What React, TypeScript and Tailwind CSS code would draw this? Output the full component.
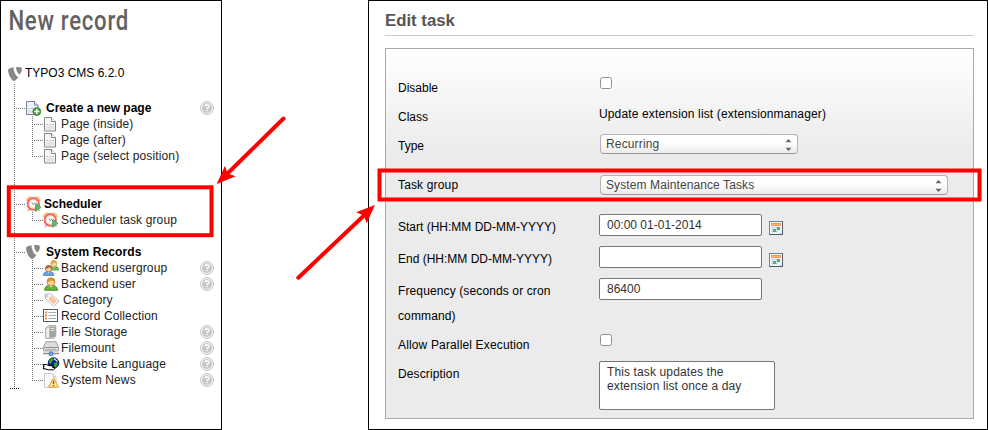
import type { ReactNode } from "react";
import { SiTypo3 } from "react-icons/si";

const V = "w-px bg-[repeating-linear-gradient(180deg,#777_0px,#777_1px,transparent_1px,transparent_2px)]";
const H = "h-px bg-[repeating-linear-gradient(90deg,transparent_0px,transparent_1px,#777_1px,#777_2px)]";

function Help() {
  return (
    <svg width="14" height="14" viewBox="0 0 14 14">
      <circle cx="7" cy="7" r="6.5" fill="#f4f4f4" stroke="#c0c0c0" strokeWidth="0.9" />
      <circle cx="7" cy="7" r="5" fill="#c6c6c6" />
      <path d="M5.1 5.5c0-2.4 3.9-2.4 3.9-.1 0 1.3-1.9 1.3-1.9 2.500" fill="none" stroke="#fff" strokeWidth="1.4" />
      <rect x="6.4" y="9" width="1.4" height="1.4" fill="#fff" />
    </svg>
  );
}

function PageIcon() {
  return (
    <svg width="13" height="15" viewBox="0 0 13 15">
      <path d="M.5.5h7l4 4v9.500H.5z" fill="#f7f7f7" stroke="#868686" />
      <path d="M7.500.5v4h4" fill="#fff" stroke="#868686" />
      <path d="M2 7.500h8" stroke="#bbb" strokeDasharray="2 1" />
      <path d="M2 9h8v3.500H2z" fill="#e2e2e2" />
    </svg>
  );
}

function NewPageIcon() {
  return (
    <svg width="16" height="16" viewBox="0 0 16 16">
      <path d="M.5.5h8l3.500 3.500v9.500H.5z" fill="#eef1f5" stroke="#73839a" />
      <path d="M8.500.5V4H12" fill="#fff" stroke="#73839a" />
      <path d="M2 7.500h8" stroke="#b9bec6" strokeDasharray="2 1" />
      <path d="M2 9h8v3H2z" fill="#dfe2e6" />
      <circle cx="10.800" cy="10.500" r="4" fill="#4c9a38" stroke="#3c8530" strokeWidth="0.7" />
      <path d="M10.800 8v5M8.300 10.500h5" stroke="#fff" strokeWidth="1.500" />
    </svg>
  );
}

function ClockIcon() {
  return (
    <svg width="16" height="16" viewBox="0 0 16 16">
      <path d="M3.500 13L2 15.200M12 13l1.500 1.700" stroke="#b5b5b5" strokeWidth="1.500" />
      <path d="M.7 4.800C.2 1.800 2.900.3 5.600 1.400zM14 4.800C14.500 1.800 11.800.3 9.100 1.400z" fill="#ffe0a0" stroke="#efa445" strokeWidth="0.9" />
      <path d="M6.400 1.300h1.800" stroke="#aaa" />
      <circle cx="7.300" cy="8" r="5.700" fill="#fff" stroke="#ee6658" strokeWidth="1.900" />
      <circle cx="7.300" cy="8" r="4.100" fill="#fbfbfb" stroke="#f9c5bc" strokeWidth="0.8" />
      <path d="M5.800 6.500L7.500 8.700l1.500-2" fill="none" stroke="#888" strokeWidth="1" />
      <path d="M9.700 7.400l5.300 3.900-5.300 4.100z" fill="#63bb66" stroke="#3f9a50" strokeWidth="0.8" />
    </svg>
  );
}

function Person({ hair, body, edge }: { hair: string; body: string; edge: string }) {
  return (
    <>
      <path d="M.6 13.300C.6 9.500 3 8.300 7 8.300s6.400 1.200 6.400 5z" fill={body} stroke={edge} strokeWidth="0.9" />
      <path d="M5 8.200L7 10.300l2-2.100z" fill="#fff" />
      <circle cx="7" cy="4.800" r="4" fill="#fbd0a0" stroke={hair} strokeWidth="1" />
      <path d="M3 5.200C2.500-.8 11.500-.8 11 5.200 9.500 4.600 8.500 4 8 3 7 4.200 5 4.700 3 5.200z" fill={hair} />
    </>
  );
}

function GroupIcon() {
  return (
    <svg width="16" height="16" viewBox="0 0 16 16">
      <g transform="translate(5.500 0) scale(.76)">
        <Person hair="#d9a53e" body="#74bb4a" edge="#4b9638" />
      </g>
      <g transform="translate(0 4.800) scale(.8)">
        <Person hair="#a8683c" body="#69a5e4" edge="#3b72bd" />
      </g>
    </svg>
  );
}

function UserIcon() {
  return (
    <svg width="14" height="14" viewBox="0 0 14 14">
      <Person hair="#cf962e" body="#69b340" edge="#3f8a2a" />
    </svg>
  );
}

function TagIcon() {
  return (
    <svg width="16" height="14" viewBox="0 0 16 14">
      <path d="M.8 1.300L6.300.6l8.700 7.400-5.200 5.300L1.500 6z" fill="#fafafa" stroke="#bdbdbd" />
      <path d="M5.500 4.300l2-1.300 5.500 5-3.200 3.200-5-4.300z" fill="#fbc39a" />
      <circle cx="3" cy="3.200" r="1" fill="#fff" stroke="#aaa" strokeWidth="0.7" />
    </svg>
  );
}

function ListIcon() {
  return (
    <svg width="15" height="13" viewBox="0 0 15 13">
      <rect x=".5" y=".5" width="14" height="12" fill="#fff" stroke="#4f5b73" />
      <path d="M2 3.500h2M2 6.500h2M2 9.500h2" stroke="#f08b3c" strokeWidth="2" />
      <path d="M5.500 3.500h7.500M5.500 6.500h7.500M5.500 9.500h7.500" stroke="#a4a9b2" />
    </svg>
  );
}

function StorageIcon() {
  return (
    <svg width="12" height="14" viewBox="0 0 12 14">
      <path d="M.7 3L4 .6h6.800v10.600L8 13.400H.7z" fill="#d2d2d2" stroke="#a3a3a3" strokeWidth="0.9" />
      <path d="M4.500 2h6v9.500l-6 1z" fill="#a2a2a2" />
      <path d="M5.500 3.500h4M5.500 5.500h4" stroke="#e4e4e4" />
      <path d="M7 8.500h2" stroke="#73d452" strokeWidth="1.500" />
      <path d="M1.500 4v8.500H4V2.700z" fill="#f1f1f1" />
    </svg>
  );
}

function MountIcon() {
  return (
    <svg width="16" height="15" viewBox="0 0 16 15">
      <path d="M3 .6h10L15.500 6v4H.5V6z" fill="#dcdcdc" stroke="#9d9d9d" strokeWidth="0.9" />
      <path d="M1 6.500h14" stroke="#959595" />
      <path d="M2 8.500h11" stroke="#b0b0b0" />
      <path d="M0 12.500h16" stroke="#8c8c8c" strokeWidth="1.500" />
      <path d="M8 10v2" stroke="#777" />
      <rect x="6.200" y="11.200" width="3.600" height="3.200" fill="#72a8eb" stroke="#4a7cc4" strokeWidth="0.8" />
    </svg>
  );
}

function GlobeIcon() {
  return (
    <svg width="17" height="14" viewBox="0 0 17 14">
      <circle cx="10.500" cy="6" r="5.300" fill="#14149a" stroke="#050530" strokeWidth=".8" />
      <path d="M6 4c1-2.500 3-3 4-2.700l1 1.700-2 1.500L8 7 6 6zM11 6l3-1 1 2-2 3.500-2-1z" fill="#29a834" />
      <path d="M11 1.500l3.500 3" stroke="#cfe3f8" strokeWidth="1.500" />
      <path d="M.7 7.500h2.500l3 1.200h3.300v1.500L12 11l-1.500 1.800H5L3 12H.7z" fill="#fff" stroke="#000" strokeWidth="1" />
      <path d="M.7 7v5" stroke="#000" strokeWidth="1.300" strokeDasharray="1 1" />
    </svg>
  );
}

function NewsIcon() {
  return (
    <svg width="16" height="15" viewBox="0 0 16 15">
      <path d="M.5.5h8.500l3 3v11H.5z" fill="#fafafa" stroke="#ccc" />
      <path d="M9 .5v3h3" fill="#fff" stroke="#ccc" />
      <path d="M9.500 4.700l5 9.600h-10z" fill="#ffdf80" stroke="#d9a341" strokeWidth="0.9" />
      <path d="M9.500 7.700v3.300M9.500 12v1.200" stroke="#855415" strokeWidth="1.200" />
    </svg>
  );
}

type RowProps = {
  icon: ReactNode;
  label: string;
  child?: boolean;
  last?: boolean;
  help?: boolean;
  text: string;
  iconAt: string;
};

function Row({ icon, label, child, last, help, text, iconAt }: RowProps) {
  return (
    <div className="flex h-4 pl-[13px]">
      <div className="flex w-[12px] shrink-0">
        <span className={V} />
        {!child && <span className={`${H} mt-[8px] w-[11px]`} />}
      </div>
      {child && (
        <div className="ml-[6px] flex w-[11px] shrink-0">
          <span className={last ? `${V} h-[9px]` : V} />
          <span className={`${H} mt-[8px] w-[10px]`} />
        </div>
      )}
      <div className={`flex w-[18px] shrink-0 ${iconAt}`}>{icon}</div>
      <span className={`whitespace-nowrap leading-4 ${text}`}>{label}</span>
      {help && (
        <span className="ml-auto mr-[7px] mt-px">
          <Help />
        </span>
      )}
    </div>
  );
}

function Trunk({ size }: { size: string }) {
  return (
    <div className={`flex pl-[13px] ${size}`}>
      <span className={V} />
    </div>
  );
}

const B = "font-bold text-black";
const N = "text-[#222] tracking-[.13px]";

function Updown() {
  return (
    <svg width="7" height="13" viewBox="0 0 7 13" className="ml-auto mr-[5px] mt-[3px]">
      <path d="M.5 4.200L3.500 1l3 3.200zM.5 9.700l3 3.200 3-3.200z" fill="#666" />
    </svg>
  );
}

function Select({ value, size }: { value: string; size: string }) {
  return (
    <div className={`flex h-5 rounded-[4px] border border-[#b5b4b2] border-b-[#999] bg-linear-to-b from-white from-40% to-[#ebebeb] pl-[5px] leading-[19px] text-[#444] ${size}`}>
      <span>{value}</span>
      <Updown />
    </div>
  );
}

function Check() {
  return <div className="ml-px mt-[3px] size-3 rounded-[2.500px] border border-[#92908e] bg-white" />;
}

function Input({ value }: { value: string }) {
  return <div className="mt-px h-[22px] w-[163px] rounded-[2px] border border-[#777] bg-white pl-[7px] leading-[20px] text-[#333]">{value}</div>;
}

function Calendar() {
  return (
    <svg width="14" height="14" viewBox="0 0 14 14" className="ml-[7px] mt-[8px]">
      <rect x=".5" y=".5" width="13" height="13" fill="#f7f9fc" stroke="#71809a" />
      <path d="M13.500.5v13H.5" fill="none" stroke="#4e596f" />
      <path d="M2 2h10v3H2z" fill="#f8954f" />
      <path d="M3 3.500h8" stroke="#ffb983" />
      <path d="M2 6.500h10M2 8.500h10M2 10.500h7M3.500 5.500V12M5.500 5.500V12M7.500 5.500V12M9.500 5.500V10" stroke="#bfd0e3" strokeWidth=".8" />
      <path d="M8 6h3v3H8zM4 8h3v3H4z" fill="#62ad60" />
      <path d="M9 13l4-4v4z" fill="#dce6f0" />
    </svg>
  );
}

function Field({ label, size, children, labelStyle = "leading-[28px]" }: { label: string; size: string; children: ReactNode; labelStyle?: string }) {
  return (
    <div className={`flex items-start ${size}`}>
      <div className={`w-[201px] shrink-0 pr-5 ${labelStyle}`}>{label}</div>
      {children}
    </div>
  );
}

export default function App() {
  return (
    <div className="relative flex h-[430px] w-[988px] justify-between bg-white font-['Liberation_Sans',Arial,sans-serif] text-[12px] text-black">
      <aside className="h-[430px] w-[222px] border border-black">
        <h1 className="h-[64px] origin-left scale-x-[.82] whitespace-nowrap pl-[9px] pt-[4px] font-['Roboto',sans-serif] text-[27px] font-medium leading-[32px] tracking-[.9px] text-[#626262]">New record</h1>
        <div className="flex h-4 pl-[7px]">
          <SiTypo3 className="mt-[2px] size-[14px] text-[#888]" />
          <span className="ml-[3px] leading-4">TYPO3 CMS 6.2.0</span>
        </div>
        <Trunk size="mt-[3px] h-[16px]" />
        <Row icon={<NewPageIcon />} label="Create a new page" help iconAt="pt-px" text={`${B} ml-[2px]`} />
        <Row child icon={<PageIcon />} label="Page (inside)" iconAt="pl-px pt-px" text={N} />
        <Row child icon={<PageIcon />} label="Page (after)" iconAt="pl-px pt-px" text={N} />
        <Row child last icon={<PageIcon />} label="Page (select position)" iconAt="pl-px pt-px" text={N} />
        <Trunk size="h-8" />
        <Row icon={<ClockIcon />} label="Scheduler" iconAt="pl-0" text={B} />
        <Row child last icon={<ClockIcon />} label="Scheduler task group" iconAt="pl-0" text={N} />
        <Trunk size="h-4" />
        <Row icon={<SiTypo3 className="size-[14px] text-[#888]" />} label="System Records" iconAt="pt-px" text={`${B} ml-[2px] tracking-[.1px]`} />
        <Row child icon={<GroupIcon />} label="Backend usergroup" help iconAt="pl-0" text={N} />
        <Row child icon={<UserIcon />} label="Backend user" help iconAt="pl-px pt-px" text={N} />
        <Row child icon={<TagIcon />} label="Category" iconAt="pl-px pt-px" text={`${N} ml-[2px]`} />
        <Row child icon={<ListIcon />} label="Record Collection" iconAt="pl-0 pt-px" text={N} />
        <Row child icon={<StorageIcon />} label="File Storage" help iconAt="pl-[2px] pt-px" text={N} />
        <Row child icon={<MountIcon />} label="Filemount" help iconAt="pl-0 pt-px" text={N} />
        <Row child icon={<GlobeIcon />} label="Website Language" help iconAt="pl-0 pt-px" text="text-[#222] tracking-[.2px] ml-[2px]" />
        <Row child last icon={<NewsIcon />} label="System News" help iconAt="pl-px pt-px" text={N} />
        <div className="ml-[9px] h-px w-[9px] bg-[repeating-linear-gradient(90deg,#000_0px,#000_1px,transparent_1px,transparent_2px)]" />
      </aside>

      <main className="h-[430px] w-[620px] border border-black pl-4">
        <h2 className="h-[35px] w-[589px] border-b border-[#ccc] pt-[9px] text-[16.800px] font-bold leading-[22px] text-[#555]">Edit task</h2>
        <section className="mt-[12px] h-[371px] w-[589px] border border-[#aaa] bg-[linear-gradient(180deg,#fff_0px,#ebebeb_105px)] pl-3 pt-[25px]">
          <Field label="Disable" size="h-[29px]">
            <Check />
          </Field>
          <Field label="Class" size="h-[29px]">
            <span className="leading-[22px] tracking-[.14px]">Update extension list (extensionmanager)</span>
          </Field>
          <Field label="Type" size="h-[39px]">
            <div className="ml-px mt-[2px] tracking-[.15px]">
              <Select value="Recurring" size="w-[198px]" />
            </div>
          </Field>
          <Field label="Task group" size="h-[42px]" labelStyle="leading-[28px] tracking-[.15px]">
            <div className="ml-px mt-[4px] tracking-[.1px]">
              <Select value="System Maintenance Tasks" size="w-[348px]" />
            </div>
          </Field>
          <Field label="Start (HH:MM DD-MM-YYYY)" size="h-8">
            <Input value="00:00 01-01-2014" />
            <Calendar />
          </Field>
          <Field label="End (HH:MM DD-MM-YYYY)" size="h-8">
            <Input value="" />
            <Calendar />
          </Field>
          <Field label="Frequency (seconds or cron command)" size="h-[54px]" labelStyle="pt-[2px] leading-[25px] tracking-[.12px]">
            <Input value="86400" />
          </Field>
          <Field label="Allow Parallel Execution" size="h-[29px]" labelStyle="leading-[28px] tracking-[.15px]">
            <Check />
          </Field>
          <Field label="Description" size="h-[49px]" labelStyle="leading-[28px] tracking-[.13px]">
            <div className="mt-px h-[49px] w-[176px] rounded-[2px] border border-[#777] bg-white pl-[7px] pr-8 pt-[3px] leading-[14px] tracking-[.12px] text-[#333]">This task updates the extension list once a day</div>
          </Field>
        </section>
      </main>

      <svg width="988" height="430" viewBox="0 0 988 430" className="absolute left-0 top-0">
        <g fill="none" stroke="#f00" strokeWidth="4">
          <rect x="8.800" y="187.300" width="202.700" height="47.900" />
          <rect x="379.500" y="170.500" width="600" height="29" />
          <path d="M283.500 118.500L226 175M298.300 277.700L365 214.500" strokeLinecap="round" />
        </g>
        <path d="M216.700 184L225 165.700L227.500 173.500L235.700 176.300zM375 205L356 212.300L364 215.500L366.700 223.300z" fill="#f00" />
      </svg>
    </div>
  );
}
